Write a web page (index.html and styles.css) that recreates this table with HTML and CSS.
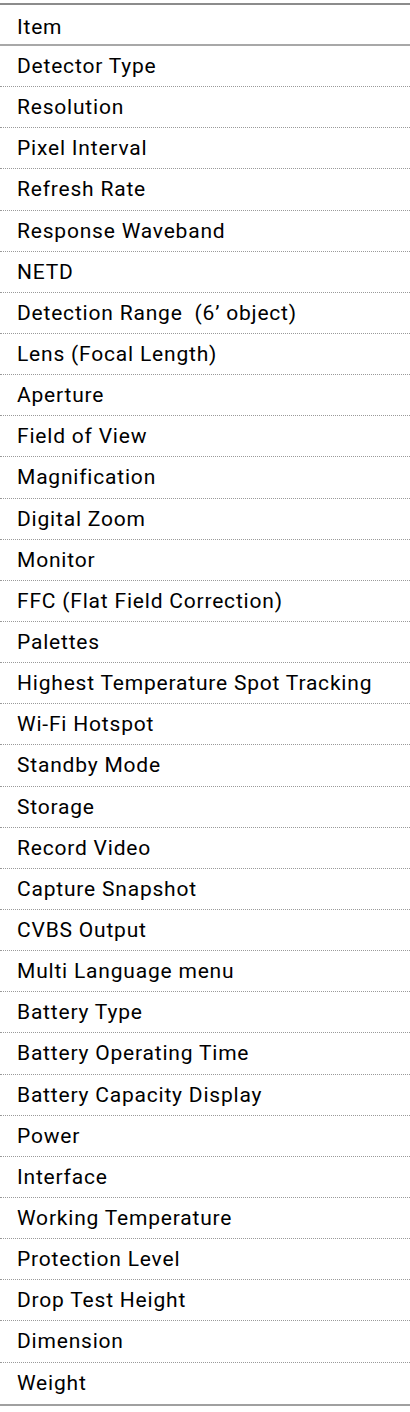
FILE: index.html
```html
<!DOCTYPE html>
<html lang="en">
<head>
  <meta charset="UTF-8" />
  <meta name="viewport" content="width=device-width, initial-scale=1.0"/>
  <title>Specifications</title>
  <link rel="stylesheet" href="styles.css">
</head>
<body>
  <div class="spec-table">
    <div class="spec-head">Item</div>
    <div class="spec-row">Detector Type</div>
    <div class="spec-row">Resolution</div>
    <div class="spec-row">Pixel Interval</div>
    <div class="spec-row">Refresh Rate</div>
    <div class="spec-row">Response Waveband</div>
    <div class="spec-row">NETD</div>
    <div class="spec-row">Detection Range&nbsp; (6’ object)</div>
    <div class="spec-row">Lens (Focal Length)</div>
    <div class="spec-row">Aperture</div>
    <div class="spec-row">Field of View</div>
    <div class="spec-row">Magnification</div>
    <div class="spec-row">Digital Zoom</div>
    <div class="spec-row">Monitor</div>
    <div class="spec-row">FFC (Flat Field Correction)</div>
    <div class="spec-row">Palettes</div>
    <div class="spec-row">Highest Temperature Spot Tracking</div>
    <div class="spec-row">Wi-Fi Hotspot</div>
    <div class="spec-row">Standby Mode</div>
    <div class="spec-row">Storage</div>
    <div class="spec-row">Record Video</div>
    <div class="spec-row">Capture Snapshot</div>
    <div class="spec-row">CVBS Output</div>
    <div class="spec-row">Multi Language menu</div>
    <div class="spec-row">Battery Type</div>
    <div class="spec-row">Battery Operating Time</div>
    <div class="spec-row">Battery Capacity Display</div>
    <div class="spec-row">Power</div>
    <div class="spec-row">Interface</div>
    <div class="spec-row">Working Temperature</div>
    <div class="spec-row">Protection Level</div>
    <div class="spec-row">Drop Test Height</div>
    <div class="spec-row">Dimension</div>
    <div class="spec-row last">Weight</div>
  </div>
</body>
</html>
```

FILE: styles.css
```css
body {
  font-family: Roboto, "Liberation Sans", sans-serif;
  margin: 0;
  padding: 3px 0 0;
  background: #fff;
  color: #000;
}

.spec-table {
  border-top: 2px solid #8c8c8c;
  border-bottom: 2px solid #a0a0a0;
}

.spec-head,
.spec-row {
  padding: 0 17px;
  font-size: 21px;
  letter-spacing: 0.8px;
  box-sizing: border-box;
}

.spec-head {
  height: 41px;
  padding-top: 5px;
  line-height: 34px;
  border-bottom: 2px solid #a8a8a8;
}

.spec-row {
  height: 41.15px;
  line-height: 40px;
  border-bottom: 1px dotted #9a9a9a;
}

.spec-row.last {
  border-bottom: none;
}
```
